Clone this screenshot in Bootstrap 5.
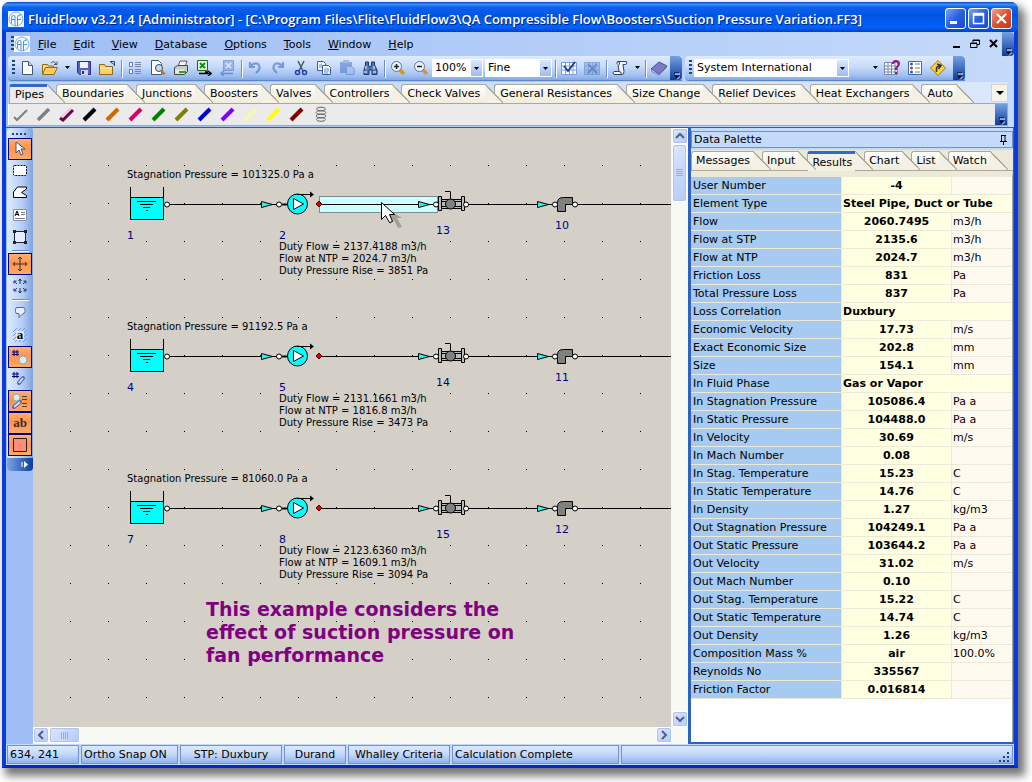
<!DOCTYPE html>
<html lang="en">
<head>
<meta charset="utf-8">
<meta name="viewport" content="width=device-width, initial-scale=1">
<title>FluidFlow v3.21.4</title>
<link href="https://cdn.jsdelivr.net/npm/bootstrap@5.3.0/dist/css/bootstrap.min.css" rel="stylesheet">
<style>
:root{--bar:linear-gradient(#e0ecfe 0,#c6dafb 45%,#a3c1f1 80%,#82a8e4)}
body{background:#fff;color:#000;font:11px/16px "DejaVu Sans",Verdana,sans-serif}
button,select{font:inherit;color:inherit}
.app{margin:2px 14px 14px 2px;min-height:calc(100vh - 16px);border:solid #0a3be0;border-width:0 4px 3px;border-bottom-color:#0729b8;border-radius:8px 8px 0 0;box-shadow:5px 6px 8px 2px #777;background:#9ebef5}
.titlebar{height:30px;margin:0 -4px;padding:3px 6px 0;border-radius:7px 7px 0 0;background:linear-gradient(#0a48d0 0,#3c8cf8 8%,#0a62ee 18%,#0054e3 45%,#0062fb 85%,#003fc8);color:#fff}
.titletext{font:600 13px/18px "Open Sans","Trebuchet MS",sans-serif;text-shadow:1px 1px #00247e}
.wingroup{gap:2px}
.winbtn{width:21px;height:21px;border:1px solid #fff;border-radius:3px;background:linear-gradient(135deg,#7ba3f5,#2a5fe0 50%,#1a4bc8)}
.winbtn.shut{background:linear-gradient(135deg,#f0a088,#e0502c 50%,#c83818)}
.menubar{height:24px;padding-left:5px;background:linear-gradient(90deg,#9ebef5,#c4dafa)}
.menubar a{color:#000;text-decoration:none;padding:1px 9px 0 8px}
.toolrow{height:26px;padding-left:2px;gap:3px;background:linear-gradient(90deg,#9ebef5,#c4dafa)}
.strip{height:24px;padding-left:4px;background:var(--bar);border-radius:4px 0 0 4px;box-shadow:0 1px #5a84cc}
.grip{width:3px;height:16px;flex:none;background:repeating-linear-gradient(#23408a 0 2px,transparent 2px 4px)}
.tool{width:23px;height:22px;border:0;background:none;padding:0;display:flex;align-items:center;justify-content:center;flex:none}
.tool svg,.pen svg{width:16px;height:16px;flex:none}
.slim{width:11px}
.off{opacity:.5}
.sep{width:1px;height:17px;margin:0 1px 0 3px;background:#6a8ccb;box-shadow:1px 1px #fff;flex:none}
.more{width:12px;align-self:stretch;border:0;padding:0;background:linear-gradient(#76a0e4,#0a3d9c);border-radius:0 4px 4px 0;display:flex;align-items:end;justify-content:center}
.combo{height:18px;border:1px solid #fff;border-radius:0;appearance:none;padding:0 2px;background:url("data:image/svg+xml,%3Csvg xmlns='http://www.w3.org/2000/svg' width='5' height='3'%3E%3Cpath d='M0 0h5L2.500 3z'/%3E%3C/svg%3E") right 3px center no-repeat,linear-gradient(#dbe8fd,#9dbcf0) right/11px 100% no-repeat,#fff}
.zoombox{width:51px;margin-right:2px}.gradebox{width:67px}.unitbox{width:155px;margin-left:2px}
.blank{width:20px}
.component{background:linear-gradient(90deg,#9ebef5,#c4dafa);padding:0 6px 1px 2px;border-bottom:1px solid #2d5bb0}
.tabline{height:21px;padding:2px 0 0 1px;background:linear-gradient(90deg,#bdd3f8,#dbe7fc);overflow:hidden}
.tabx{position:relative;flex:none;height:19px;margin:0 9px 0 0;padding:0 3px 0 4px;border:1px solid #aca899;border-width:1px 0 0 1px;border-radius:3px 0 0 0;background:linear-gradient(#fffffd,#efecdc);white-space:nowrap;text-align:left}
.tabx.long{padding-right:6px}
.tabline .tabx{padding-left:5px}
.tabline .tabx.long{padding-right:5px}
.tabx::after{content:"";position:absolute;z-index:1;left:100%;top:-1px;width:18px;height:19px;background:linear-gradient(to top right,#f4f1e4 0 47%,#aca899 48% 52%,transparent 53%)}
.tabx span{position:relative;z-index:2}
.tabx.on{background:#ebebeb;border-top:3px solid #316ac5;padding-top:0;line-height:14px}
.tabx.on::after{top:-3px;background:linear-gradient(to top right,#ebebeb 0 47%,#aca899 48% 52%,transparent 53%)}
.moretabs{width:17px;height:18px;border:1px solid #d8d4c4;background:#f6f4ea}
.pens{height:23px;background:#ebebeb;border:1px solid #aca899;border-left-color:#fff}
.pen{width:23px;height:20px;border:0;padding:0;background:none;display:flex;align-items:center;justify-content:center}
.sidewrap{margin-left:1px}
.sidebar{width:26px;height:343px;background:linear-gradient(90deg,#dfebfe,#b4cdf6 60%,#7ea4e0);border-radius:4px;overflow:hidden}
.sidebar .tool{width:24px}
.sidebar .on{background:linear-gradient(#ffb070,#ff9448 45%,#ffa868);border:1px solid #000080}
.hgrip{width:16px;height:2px;margin:5px 0 3px;background:repeating-linear-gradient(90deg,#23408a 0 2px,transparent 2px 4px);flex:none}
.hsep{width:17px;height:1px;margin:2px 0;background:#6a8ccb;box-shadow:0 1px #fff;flex:none}
.side-end{width:26px;height:13px;border:0;padding:0 4px 0 0;background:linear-gradient(90deg,#7ba4e6,#0a3d9c)}
.sheet{background:#d4d0c8}
.sheet svg{display:block;width:100%;height:100%}
.sheet .lbl{font-size:10px}
.sheet .num{font-size:11px;fill:#000080}
.sheet .note{font-size:19px;font-weight:700;fill:#800080}
.vbar{width:17px;background:#f9f9f4}
.hbar{height:17px;background:#f9f9f4}
.sb{border:1px solid #fff;outline:1px solid #b0c4f4;outline-offset:-2px;border-radius:3px;background:linear-gradient(135deg,#dce6fe,#b6c9f8);padding:0;width:16px;height:16px;display:flex;align-items:center;justify-content:center}
.sb.tall{height:58px;width:15px}.sb.wide{width:31px}
.palette{width:326px;border:solid #2d63c0;border-width:0 1px 2px 3px;background:#c4dafa;padding:3px 0 0}
.palhead{height:17px;border:1px solid #7a8fb8;background:#c4dafa;padding:0 5px 0 2px;margin-bottom:2px}
.paltabs{height:21px;background:#ece9d8;padding:1px 0 0;border-bottom:1px solid #aca899}
.paltabs .tabx.on{height:20px;line-height:12px;background:#f4f1e4}
.paltabs .tabx.on::after{background:linear-gradient(to top right,#f4f1e4 0 47%,#aca899 48% 52%,transparent 53%)}
.gridbox{background:#fff;border-top:6px solid #ece9d8;border-right:1px solid #aca899}
.props{width:100%;table-layout:fixed;border-collapse:separate;border-spacing:0;line-height:17px}
.props th,.props td{height:18px;padding:0 1px;font-weight:400;white-space:nowrap;border-bottom:1px solid #ece9d8;border-right:1px solid #ece9d8}
.props th{width:151px;background:#a6caf0;padding-left:2px}
.props td{width:110px;background:#ffffe1;font-weight:700;text-align:center}
.props td+td{width:auto;background:#fffaf0;font-weight:400;text-align:left;border-right:0}
.props .span{text-align:left;border-right:0}
.statusbar{height:21px;gap:2px;padding:1px;background:#c4dafa}
.cellx{height:19px;line-height:17px;border:1px solid #6f93cc;background:linear-gradient(#dce9fd,#c2d8fa 50%,#8fb2e9);padding:0 2px;white-space:nowrap;width:102px}
.cellx.c1{width:72px}.cellx.c2{width:97px}.cellx.c4{width:62px}.cellx.c6{width:167px}
.cellx.c7{width:auto}
</style>
</head>
<body>
<svg class="d-none" aria-hidden="true">
<symbol id="i-more" viewBox="0 0 7 8"><path d="M1 1h5" stroke="#000"/><path d="M1 3.500h5L3.500 6.500z" fill="#000"/><path d="M2 2h5M4 7.500l3-3" stroke="#fff" fill="none"/></symbol>
<symbol id="i-logo" viewBox="0 0 16 16"><path fill="#fff" d="M0 0h16v16H0z"/><circle cx="8" cy="8" r="7" fill="#f2f8fe" stroke="#78aede"/><path d="M3.500 12.500V7q0-2.500 2-2.500t1.500 2V15M9.500 15V6q0-2.500 3.500-2M3.500 8.500h3.500M9.500 8.500h3.500" fill="none" stroke="#4d93d6"/></symbol>
<symbol id="s-unit" overflow="visible">
 <path d="M167 204.500h112M321 204.500h115M466 204.500h2600" stroke="#000"/>
 <path d="M130 197h33v22h-33z" fill="#0ff"/><path d="M130.500 187v32.500h33V187M130 197.500h33M137 201.500h19M140 204.500h13M143 207.500h7M146 210.500h2" fill="none" stroke="#000"/>
 <path d="M282 204.500h5" stroke="#000" stroke-width="2"/>
 <circle cx="297.500" cy="204" r="10" fill="#0ff" stroke="#000"/><path d="M293.500 198.500v11l10-5.500z" fill="#fff" stroke="#000"/><path d="M297 194.500h14" stroke="#000"/><path d="M310 191.500v6l4-3z"/>
 <path d="M319 201l3 3-3 3-3-3z" fill="#e00000" stroke="#500"/>
 <g fill="#3ee" stroke="#000"><path d="M261.500 201.500v6l11-3zM418.500 201.500v6l11-3zM537.500 201.500v6l11-3z"/></g>
 <path d="M438.500 196.500h3v3h20v-3h3v14h-3v-2h-20v2h-3z" fill="#bbb" stroke="#000"/><path d="M441.500 199v10M461.500 199v10M450.500 200v-8M445 191.500h5.500M441 201.500h5M455 201.500h6M441 206.500h5M455 206.500h6" fill="none" stroke="#000"/><circle cx="450.500" cy="204" r="5" fill="#808080" stroke="#000"/>
 <path d="M557.500 211.500v-9q0-5 6-5h9v7h-7v7z" fill="#808080" stroke="#000"/>
 <g fill="#fff" stroke="#000"><circle cx="167" cy="204.500" r="2.500"/><circle cx="279" cy="204.500" r="2.500"/><circle cx="436" cy="204.500" r="2.500"/><circle cx="466" cy="204.500" r="2.500"/><circle cx="555" cy="204.500" r="2.500"/><circle cx="575" cy="204.500" r="2.500"/></g>
</symbol>
</svg>

<div class="app d-flex flex-column">
 <header class="titlebar d-flex align-items-center">
  <svg width="16" height="16" class="me-1 flex-shrink-0"><use href="#i-logo"/></svg>
  <div class="titletext flex-grow-1 text-nowrap overflow-hidden">FluidFlow v3.21.4 [Administrator] - [C:\Program Files\Flite\FluidFlow3\QA Compressible Flow\Boosters\Suction Pressure Variation.FF3]</div>
  <div class="wingroup d-flex">
   <button class="winbtn p-0 d-flex" aria-label="Minimize"><svg width="19" height="19"><path d="M4 12h7v3H4z" fill="#fff"/></svg></button>
   <button class="winbtn p-0 d-flex" aria-label="Maximize"><svg width="19" height="19"><path d="M4.500 4.500h10v10h-10zM4 6h11" fill="none" stroke="#fff" stroke-width="1.500"/></svg></button>
   <button class="winbtn shut p-0 d-flex" aria-label="Close"><svg width="19" height="19"><path d="M5 5l9 9M14 5l-9 9" stroke="#fff" stroke-width="2.200"/></svg></button>
  </div>
 </header>

 <nav class="menubar d-flex align-items-center">
  <span class="grip"></span><svg width="16" height="16"><use href="#i-logo"/></svg>
  <a href="#"><u>F</u>ile</a><a href="#"><u>E</u>dit</a><a href="#"><u>V</u>iew</a><a href="#"><u>D</u>atabase</a><a href="#"><u>O</u>ptions</a><a href="#"><u>T</u>ools</a><a href="#"><u>W</u>indow</a><a href="#"><u>H</u>elp</a>
  <button class="tool slim ms-auto me-2" aria-label="Minimize document"><svg viewBox="-5 -3 16 16"><path d="M1 8h7" stroke="#000" stroke-width="2"/></svg></button>
  <button class="tool slim me-2" aria-label="Restore document"><svg viewBox="-4 -3 16 16"><path d="M3 3V1h6.500v4.500H7M.500 4.500H7v4H.500zM.500 4h6.500M3 1.500h6" fill="none" stroke="#000"/></svg></button>
  <button class="tool slim me-1" aria-label="Close document"><svg viewBox="-4 -3 16 16"><path d="M1 1l7 7M8 1L1 8" stroke="#000" stroke-width="2"/></svg></button>
  <button class="more" aria-label="Menu options"><svg width="7" height="8"><use href="#i-more"/></svg></button>
 </nav>

 <div class="toolrow d-flex">
  <div class="strip d-flex align-items-center">
   <span class="grip"></span>
   <button class="tool" aria-label="New"><svg viewBox="0 0 16 16"><path d="M3.500 1.500h6l4 4v9h-10z" fill="#fff" stroke="#46566f"/><path d="M9.500 1.500v4h4" fill="#c6d6ee" stroke="#46566f"/></svg></button>
   <button class="tool" aria-label="Open"><svg viewBox="0 0 16 16"><path d="M.500 14V4.500h5l1 1.500h5v2" fill="#ffd86b" stroke="#92681c"/><path d="M.500 14.500l3-7h12l-3.500 7z" fill="#ffcf58" stroke="#92681c"/><path d="M9 3q3-3 5 1M15 1.500v3h-3" fill="none" stroke="#3c5578"/></svg></button>
   <button class="tool slim" aria-label="Open recent"><svg viewBox="-6 -6 16 16"><path d="M0 0h5L2.500 3z"/></svg></button>
   <button class="tool" aria-label="Save"><svg viewBox="0 0 16 16"><path d="M1.500 1.500h13v13h-11l-2-2z" fill="#5a62c8" stroke="#2c3080"/><path d="M4 2h8v6H4z" fill="#eef2fc"/><path d="M5 10h7v5H5z" fill="#cfd4e8"/><path d="M6 11h2v3H6z" fill="#2c3080"/></svg></button>
   <button class="tool" aria-label="Close project"><svg viewBox="0 0 16 16"><path d="M.500 14.500v-10h5l1 2h7v8z" fill="#ffd064" stroke="#92681c"/><path d="M1 8h12" stroke="#fff3b8"/><path d="M15.500 6V1.500H11M11 1.500l4 3" fill="none" stroke="#23408a"/></svg></button>
   <span class="sep"></span>
   <button class="tool" aria-label="Properties"><svg viewBox="0 0 16 16"><path d="M2.500 2.500h3v4h-3zM2.500 9.500h3v4h-3z" fill="#fff" stroke="#6178c4"/><path d="M8 2.500h6M8 4.500h6M8 6.500h6M8 9.500h6M8 11.500h6M8 13.500h6" stroke="#7c86a0"/></svg></button>
   <button class="tool" aria-label="Print preview"><svg viewBox="0 0 16 16"><path d="M1.500 .500h7l3 3v11h-10z" fill="#fff" stroke="#46566f"/><circle cx="9" cy="8" r="3.500" fill="#bfe0ee" stroke="#445"/><path d="M11.500 10.500l3 4" stroke="#c47a1c" stroke-width="2.500"/></svg></button>
   <button class="tool" aria-label="Print"><svg viewBox="0 0 16 16"><path d="M5 7l2-6h7l-2 6" fill="#fff" stroke="#556"/><path d="M1.500 7.500l3-2h10v6l-3 3h-10z" fill="#c8ccc4" stroke="#444"/><path d="M2 9.500h9v4H2z" fill="#e8ece4"/><path d="M6 12h7" stroke="#2da02d" stroke-width="2"/></svg></button>
   <button class="tool" aria-label="Export to Excel"><svg viewBox="0 0 16 16"><path d="M1.500 .500h10v10h-10z" fill="#e8f8e4" stroke="#176b17"/><path d="M4 3l5 5M9 3L4 8" stroke="#168a16" stroke-width="2"/><path d="M3 13.500h11M12 11l3 2.500-3 2.500M9 12h3" stroke="#000" stroke-width="1.500" fill="none"/></svg></button>
   <button class="tool off" aria-label="Import from Excel"><svg viewBox="0 0 16 16"><path d="M4.500 .500h10v10h-10z" fill="#6a94dc" stroke="#3d66b4"/><path d="M7 3l5 5M12 3L7 8" stroke="#fff" stroke-width="1.500"/><path d="M14 13.500H3M5 11l-3 2.500L5 16" stroke="#2d56a4" stroke-width="1.500" fill="none"/></svg></button>
   <span class="sep"></span>
   <button class="tool off" aria-label="Undo"><svg viewBox="0 0 16 16"><path d="M3 2v5h5M3 7q4-5 8-3 4 4-2 9" fill="none" stroke="#2d5bb4" stroke-width="2.200"/></svg></button>
   <button class="tool off" aria-label="Redo"><svg viewBox="0 0 16 16"><path d="M13 2v5H8M13 7Q9 2 5 4q-4 4 2 9" fill="none" stroke="#2d5bb4" stroke-width="2.200"/></svg></button>
   <button class="tool" aria-label="Cut"><svg viewBox="0 0 16 16"><path d="M5 1l5 10M11 1L6 11" stroke="#46566f" stroke-width="1.500"/><circle cx="4.500" cy="12.500" r="2" fill="none" stroke="#1c3fa8" stroke-width="1.500"/><circle cx="11.500" cy="12.500" r="2" fill="none" stroke="#1c3fa8" stroke-width="1.500"/></svg></button>
   <button class="tool" aria-label="Copy"><svg viewBox="0 0 16 16"><path d="M1.500 1.500h6l2 2v7h-8z" fill="#fff" stroke="#3a5a9c"/><path d="M6.500 5.500h6l2 2v7h-8z" fill="#fff" stroke="#3a5a9c"/><path d="M3 5h3M3 7h3M8 9h5M8 11h5M8 13h4" stroke="#5b86d8"/></svg></button>
   <button class="tool off" aria-label="Paste"><svg viewBox="0 0 16 16"><path d="M1 2h12v11H1z" fill="#3d6cc0"/><path d="M4 0h6v3H4z" fill="#7090c8"/><path d="M7.500 6.500h5l2.500 2v6H7.500z" fill="#9ab8ea" stroke="#3d66b4"/></svg></button>
   <button class="tool" aria-label="Find"><svg viewBox="0 0 16 16"><path d="M3.500 2h3v3l1 2h1l1-2V2h3v3l2.500 5v4.500h-5V10h-3v4.500h-5V10L3.500 5z" fill="#5476b8" stroke="#1d3264"/><path d="M2 12h3M11 12h3M4 6v3M12 6v3" stroke="#fff"/></svg></button>
   <span class="sep"></span>
   <button class="tool" aria-label="Zoom in"><svg viewBox="0 0 16 16"><path d="M10 10l4 4" stroke="#d09a30" stroke-width="3.500"/><circle cx="6.500" cy="6.500" r="5" fill="#e8f2fc" stroke="#66758c"/><path d="M4 6.500h5M6.500 4v5" stroke="#222" stroke-width="1.500"/></svg></button>
   <button class="tool" aria-label="Zoom out"><svg viewBox="0 0 16 16"><path d="M10 10l4 4" stroke="#d09a30" stroke-width="3.500"/><circle cx="6.500" cy="6.500" r="5" fill="#e8f2fc" stroke="#66758c"/><path d="M4 6.500h5" stroke="#222" stroke-width="1.500"/></svg></button>
   <select class="combo zoombox" aria-label="Zoom"><option>100%</option></select>
   <select class="combo gradebox" aria-label="Grid"><option>Fine</option></select>
   <span class="sep"></span>
   <button class="tool" aria-label="Calculate"><svg viewBox="0 0 16 16"><path d="M.500 2.500h15v12H.500zM.500 6h15M.500 10h15M4.500 3v11M8.500 3v11M12 3v11" fill="#fff" stroke="#7c9ad4"/><path d="M3 6l4 5 7-9" fill="none" stroke="#12409c" stroke-width="2"/></svg></button>
   <button class="tool off" aria-label="Stop"><svg viewBox="0 0 16 16"><path d="M.500 2.500h15v12H.500zM.500 6h15M.500 10h15M4.500 3v11M8.500 3v11M12 3v11" fill="#7ca4e8" stroke="#4c70b4"/><path d="M4 4l9 9M13 4l-9 9" stroke="#12409c" stroke-width="2"/></svg></button>
   <span class="sep"></span>
   <button class="tool" aria-label="Script"><svg viewBox="0 0 16 16"><path d="M5.500 1.500h9q1 3-1 3H11l1 7q0 3-2 3H2q-2-2 0-3h5l-1-7q-2-1-.500-3z" fill="#eef2fa" stroke="#334260"/><path d="M5.500 1.500q3 0 2 3M7 11.500q3 0 2 3" fill="none" stroke="#334260"/></svg></button>
   <button class="tool slim" aria-label="Script list"><svg viewBox="-6 -6 16 16"><path d="M0 0h5L2.500 3z"/></svg></button>
   <span class="sep"></span>
   <button class="tool" aria-label="Help book"><svg viewBox="0 0 16 16"><path d="M0 9l8-7 8 4-8 8z" fill="#7d7cc8" stroke="#4c4a90"/><path d="M0 9v2l8 4 8-8V6l-8 8z" fill="#eef" stroke="#4c4a90" stroke-width=".700"/></svg></button>
   <button class="more" aria-label="Toolbar options"><svg width="7" height="8"><use href="#i-more"/></svg></button>
  </div>
  <div class="strip d-flex align-items-center">
   <span class="grip"></span>
   <select class="combo unitbox" aria-label="Units"><option>System International</option></select>
   <span class="blank"></span>
   <button class="tool slim" aria-label="Unit list"><svg viewBox="-6 -6 16 16"><path d="M0 0h5L2.500 3z"/></svg></button>
   <button class="tool" aria-label="Query table"><svg viewBox="0 0 16 16"><path d="M.500 2.500h13v12H.500zM.500 6h13M.500 9h13M.500 12h13M4 3v11M7.500 3v11M11 3v11" fill="#fff" stroke="#7786ae"/><path d="M9 4q0-3 3-3t3 3q0 2-3 4v2M12 12v2" fill="none" stroke="#8c1c8c" stroke-width="2"/></svg></button>
   <button class="tool" aria-label="Legend"><svg viewBox="0 0 16 16"><path d="M1.500 1.500h13v13h-13z" fill="#fff" stroke="#4466aa"/><path d="M8 4h5M8 8h5M8 12h5" stroke="#777"/><circle cx="4.500" cy="4" r="1.500" fill="#26b"/><circle cx="4.500" cy="8" r="1.500" fill="#c33"/><circle cx="4.500" cy="12" r="1.500" fill="#26b"/></svg></button>
   <button class="tool me-1" aria-label="Route"><svg viewBox="0 0 16 16"><path d="M8 .500L15.500 8 8 15.500.500 8z" fill="#ffd23c" stroke="#a07410"/><path d="M6.500 12V8.500q0-2 3-2.500M7 4l4 1.500L8.500 9" fill="none" stroke="#333" stroke-width="1.600"/></svg></button>
   <button class="more" aria-label="Toolbar options"><svg width="7" height="8"><use href="#i-more"/></svg></button>
  </div>
 </div>

 <section class="component">
  <div class="tabline d-flex">
   <button class="tabx on"><span>Pipes</span></button><button class="tabx"><span>Boundaries</span></button><button class="tabx"><span>Junctions</span></button><button class="tabx"><span>Boosters</span></button><button class="tabx"><span>Valves</span></button><button class="tabx"><span>Controllers</span></button><button class="tabx long"><span>Check Valves</span></button><button class="tabx long"><span>General Resistances</span></button><button class="tabx"><span>Size Change</span></button><button class="tabx long"><span>Relief Devices</span></button><button class="tabx"><span>Heat Exchangers</span></button><button class="tabx"><span>Auto</span></button>
   <button class="tool moretabs ms-auto" aria-label="More tabs"><svg viewBox="-4 -6 16 16"><path d="M0 0h8L4 4z"/></svg></button>
  </div>
  <div class="pens d-flex">
   <button class="pen" aria-label="Thin grey pipe"><svg viewBox="0 0 16 16"><path d="M1 11l3 3L14 4" fill="none" stroke="#808080" stroke-width="2"/></svg></button>
   <button class="pen" aria-label="Grey pipe"><svg viewBox="0 0 16 16"><path d="M2 14L13 3" stroke="#808080" stroke-width="3.500"/></svg></button>
   <button class="pen" aria-label="Plum pipe"><svg viewBox="0 0 16 16"><path d="M1 12l3 2L14 4" stroke="#700048" fill="none" stroke-width="3"/><path d="M2 11L12 2" stroke="#fbd" stroke-width="1.500"/></svg></button>
   <button class="pen" aria-label="Black pipe"><svg viewBox="0 0 16 16"><path d="M2 14L13 3" stroke="#000" stroke-width="4"/></svg></button>
   <button class="pen" aria-label="Orange pipe"><svg viewBox="0 0 16 16"><path d="M2 14L13 3" stroke="#d06800" stroke-width="4"/></svg></button>
   <button class="pen" aria-label="Pink pipe"><svg viewBox="0 0 16 16"><path d="M2 14L13 3" stroke="#d8006c" stroke-width="4"/></svg></button>
   <button class="pen" aria-label="Green pipe"><svg viewBox="0 0 16 16"><path d="M2 14L13 3" stroke="#008000" stroke-width="4"/></svg></button>
   <button class="pen" aria-label="Olive pipe"><svg viewBox="0 0 16 16"><path d="M2 14L13 3" stroke="#808000" stroke-width="4"/></svg></button>
   <button class="pen" aria-label="Blue pipe"><svg viewBox="0 0 16 16"><path d="M2 14L13 3" stroke="#0000d8" stroke-width="4"/></svg></button>
   <button class="pen" aria-label="Violet pipe"><svg viewBox="0 0 16 16"><path d="M2 14L13 3" stroke="#8000ff" stroke-width="4"/></svg></button>
   <button class="pen" aria-label="Pale pipe"><svg viewBox="0 0 16 16"><path d="M2 14L13 3" stroke="#f6f6b4" stroke-width="4"/></svg></button>
   <button class="pen" aria-label="Yellow pipe"><svg viewBox="0 0 16 16"><path d="M2 14L13 3" stroke="#ff0" stroke-width="4"/></svg></button>
   <button class="pen" aria-label="Maroon pipe"><svg viewBox="0 0 16 16"><path d="M2 14L13 3" stroke="#800000" stroke-width="4"/></svg></button>
   <button class="pen" aria-label="Coil"><svg viewBox="0 0 16 16"><g fill="none" stroke="#666"><ellipse cx="9" cy="3" rx="4.500" ry="1.800"/><ellipse cx="9" cy="6.500" rx="5" ry="1.800"/><ellipse cx="9" cy="10" rx="5" ry="1.800"/><ellipse cx="9" cy="13.500" rx="4.500" ry="1.800"/></g></svg></button>
   <button class="more ms-auto rounded-0" aria-label="Palette options"><svg width="7" height="8"><use href="#i-more"/></svg></button>
  </div>
 </section>

 <main class="d-flex flex-grow-1">
  <div class="sidewrap">
   <div class="sidebar d-flex flex-column align-items-center">
    <span class="hgrip"></span>
    <button class="tool on" aria-label="Select"><svg viewBox="0 0 16 16"><path d="M4 1v11l3-3 2 5 2-1-2-5h4z" fill="#fff" stroke="#46566f"/></svg></button>
    <button class="tool" aria-label="Marquee"><svg viewBox="0 0 16 16"><rect x="1.500" y="2.500" width="13" height="10" rx="1" fill="#fff" stroke="#000" stroke-dasharray="2 1"/></svg></button>
    <button class="tool" aria-label="Polygon"><svg viewBox="0 0 16 16"><path d="M1.500 12.500V7l4-5h9v2l-5 3.500 5 3v2z" fill="#fff" stroke="#000"/></svg></button>
    <button class="tool" aria-label="Text"><svg viewBox="0 0 16 16"><path d="M1.500 2.500h13v11h-13z" fill="#fff" stroke="#8791a8"/><path d="M3 9l2-5 2 5M4 7.500h2" fill="none" stroke="#000"/><path d="M9 5.500h4M9 7.500h4M3 11.500h10" stroke="#778"/></svg></button>
    <button class="tool" aria-label="Frame"><svg viewBox="0 0 16 16"><path d="M2.500 2.500h11v11h-11z" fill="#e4eefe" stroke="#223"/><path d="M1 1h3v3H1zM12 1h3v3h-3zM1 12h3v3H1zM12 12h3v3h-3z" fill="#223"/></svg></button>
    <span class="hsep"></span>
    <button class="tool on" aria-label="Move"><svg viewBox="0 0 16 16"><path d="M8 1v14M1 8h14M6 3l2-2 2 2M6 13l2 2 2-2M3 6L1 8l2 2M13 6l2 2-2 2" fill="none" stroke="#333"/></svg></button>
    <button class="tool" aria-label="Spread"><svg viewBox="0 0 16 16"><path d="M8 6V1M8 10v5M6.500 3L8 1l1.500 2M6.500 13L8 15l1.500-2M5 6L2 3M2 5.500V3h2.500M11 6l3-3M11.500 3H14v2.500M5 10l-3 3M2 10.500V13h2.500M11 10l3 3M14 10.500V13h-2.500" fill="none" stroke="#23345c"/></svg></button>
    <span class="hsep"></span>
    <button class="tool" aria-label="Callout"><svg viewBox="0 0 16 16"><path d="M5 2.500h6q2 0 2 2v2q0 2-2 2l-4 4v-4H5q-1.500 0-1.500-2v-2q0-2 1.500-2z" fill="#e8f0fa" stroke="#5a6a8c"/></svg></button>
    <button class="tool" aria-label="Highlight text"><svg viewBox="0 0 16 16"><path d="M1 5l4-4M1 9l8-8M1 13L13 1M3 15L15 3M7 15l8-8M11 15l4-4" stroke="#7a9ae8"/><path d="M4 4h8v9H4z" fill="#dfe9fb"/><text x="8" y="12" text-anchor="middle" font-family="Liberation Serif,serif" font-weight="700" font-size="13">a</text></svg></button>
    <button class="tool on" aria-label="Node numbers"><svg viewBox="0 0 16 16"><path d="M2 1v6M5 1v6M0 3h7M0 5.500h7" stroke="#000080"/><circle cx="11" cy="11" r="4" fill="#d8ecf4" stroke="#8aa"/></svg></button>
    <button class="tool" aria-label="Pipe numbers"><svg viewBox="0 0 16 16"><path d="M2 1v6M5 1v6M0 3h7M0 5.500h7" stroke="#000080"/><path d="M7 12l4-5" stroke="#4a6ab0" stroke-width="4" stroke-linecap="round"/><path d="M7 12l4-5" stroke="#cfe0f8" stroke-width="2"/></svg></button>
    <button class="tool on" aria-label="Results"><svg viewBox="0 0 16 16"><circle cx="4.500" cy="4.500" r="3.500" fill="#d8ecf4" stroke="#8aa"/><path d="M2 14l6-5" stroke="#4a6ab0" stroke-width="4" stroke-linecap="round"/><path d="M2 14l6-5" stroke="#cfe0f8" stroke-width="2"/><path d="M10 3.500h5M10 6.500h5M10 10.500h5M10 13.500h5" stroke="#444"/></svg></button>
    <button class="tool on" aria-label="Labels"><svg viewBox="0 0 16 16"><text x="8" y="12" text-anchor="middle" font-family="Liberation Serif,serif" font-weight="700" font-size="13" fill="#333">ab</text></svg></button>
    <button class="tool on" aria-label="Fill"><svg viewBox="0 0 16 16"><path d="M1.500 1.500h13v13h-13z" fill="#ff8c78" stroke="#222"/></svg></button>
    <button class="side-end d-flex justify-content-end align-items-center mt-auto" aria-label="More tools"><svg width="8" height="7"><path d="M1 1v5" stroke="#fff"/><path d="M3 0v7l4-3.500z" fill="#fff"/></svg></button>
   </div>
  </div>

  <div class="d-flex flex-column flex-grow-1 overflow-hidden">
   <div class="d-flex flex-grow-1">
    <div class="sheet flex-grow-1 overflow-hidden">
     <svg role="img" aria-label="Flowsheet">
      <defs><pattern id="dots" width="38" height="38" patternUnits="userSpaceOnUse"><path d="M37 37h1v1h-1z"/></pattern></defs>
      <rect width="100%" height="100%" fill="url(#dots)"/>
      <g transform="translate(-33,-128)">
       <rect x="319.500" y="196.500" width="118" height="16" fill="#ccffff" stroke="#808c8c"/>
       <use href="#s-unit"/><use href="#s-unit" y="152"/><use href="#s-unit" y="304"/>
       <g class="lbl">
        <text x="127" y="178">Stagnation Pressure = 101325.0 Pa a</text>
        <text x="279" y="250">Duty Flow = 2137.4188 m3/h</text><text x="279" y="262">Flow at NTP = 2024.7 m3/h</text><text x="279" y="274">Duty Pressure Rise = 3851 Pa</text>
        <text x="127" y="330">Stagnation Pressure = 91192.5 Pa a</text>
        <text x="279" y="402">Duty Flow = 2131.1661 m3/h</text><text x="279" y="414">Flow at NTP = 1816.8 m3/h</text><text x="279" y="426">Duty Pressure Rise = 3473 Pa</text>
        <text x="127" y="482">Stagnation Pressure = 81060.0 Pa a</text>
        <text x="279" y="554">Duty Flow = 2123.6360 m3/h</text><text x="279" y="566">Flow at NTP = 1609.1 m3/h</text><text x="279" y="578">Duty Pressure Rise = 3094 Pa</text>
       </g>
       <g class="num">
        <text x="127" y="239">1</text><text x="279" y="239">2</text><text x="436" y="234">13</text><text x="555" y="229">10</text>
        <text x="127" y="391">4</text><text x="279" y="391">5</text><text x="436" y="386">14</text><text x="555" y="381">11</text>
        <text x="127" y="543">7</text><text x="279" y="543">8</text><text x="436" y="538">15</text><text x="555" y="533">12</text>
       </g>
       <g class="note"><text x="206" y="616">This example considers the</text><text x="206" y="639">effect of suction pressure on</text><text x="206" y="662">fan performance</text></g>
       <path d="M386 208l4 16 4-4 4 8 4-1-5-9h5z" fill="#555" opacity=".4"/>
       <path d="M381.500 202.500v17l4-4 4 7 3-1-3-7h5z" fill="#fff" stroke="#000"/>
      </g>
     </svg>
    </div>
    <div class="vbar d-flex flex-column align-items-center">
     <button class="sb" aria-label="Scroll up"><svg width="10" height="8"><path d="M1 6l4-4 4 4" fill="none" stroke="#4d6185" stroke-width="2"/></svg></button>
     <div class="sb tall"><svg width="7" height="8"><path d="M0 .500h7M0 2.500h7M0 4.500h7M0 6.500h7" stroke="#8cb0f8"/></svg></div>
     <button class="sb mt-auto" aria-label="Scroll down"><svg width="10" height="8"><path d="M1 2l4 4 4-4" fill="none" stroke="#4d6185" stroke-width="2"/></svg></button>
    </div>
   </div>
   <div class="hbar d-flex pe-3">
    <button class="sb" aria-label="Scroll left"><svg width="8" height="10"><path d="M6 1L2 5l4 4" fill="none" stroke="#4d6185" stroke-width="2"/></svg></button>
    <div class="sb wide"><svg width="8" height="7"><path d="M.500 0v7M2.500 0v7M4.500 0v7M6.500 0v7" stroke="#8cb0f8"/></svg></div>
    <button class="sb ms-auto" aria-label="Scroll right"><svg width="8" height="10"><path d="M2 1l4 4-4 4" fill="none" stroke="#4d6185" stroke-width="2"/></svg></button>
   </div>
  </div>

  <aside class="palette d-flex flex-column flex-shrink-0">
   <div class="palhead d-flex align-items-center"><span class="flex-grow-1">Data Palette</span><svg width="7" height="10"><path d="M1.500 0v6M5 0v6M1 .500h5M0 6.500h7M3.500 7v3" fill="none" stroke="#000"/></svg></div>
   <div class="paltabs d-flex">
    <button class="tabx"><span>Messages</span></button><button class="tabx"><span>Input</span></button><button class="tabx on"><span>Results</span></button><button class="tabx"><span>Chart</span></button><button class="tabx"><span>List</span></button><button class="tabx"><span>Watch</span></button>
   </div>
   <div class="gridbox flex-grow-1">
    <table class="props">
     <tr><th>User Number</th><td>-4</td><td></td></tr>
     <tr><th>Element Type</th><td colspan="2" class="span">Steel Pipe, Duct or Tube</td></tr>
     <tr><th>Flow</th><td>2060.7495</td><td>m3/h</td></tr>
     <tr><th>Flow at STP</th><td>2135.6</td><td>m3/h</td></tr>
     <tr><th>Flow at NTP</th><td>2024.7</td><td>m3/h</td></tr>
     <tr><th>Friction Loss</th><td>831</td><td>Pa</td></tr>
     <tr><th>Total Pressure Loss</th><td>837</td><td>Pa</td></tr>
     <tr><th>Loss Correlation</th><td colspan="2" class="span">Duxbury</td></tr>
     <tr><th>Economic Velocity</th><td>17.73</td><td>m/s</td></tr>
     <tr><th>Exact Economic Size</th><td>202.8</td><td>mm</td></tr>
     <tr><th>Size</th><td>154.1</td><td>mm</td></tr>
     <tr><th>In Fluid Phase</th><td colspan="2" class="span">Gas or Vapor</td></tr>
     <tr><th>In Stagnation Pressure</th><td>105086.4</td><td>Pa a</td></tr>
     <tr><th>In Static Pressure</th><td>104488.0</td><td>Pa a</td></tr>
     <tr><th>In Velocity</th><td>30.69</td><td>m/s</td></tr>
     <tr><th>In Mach Number</th><td>0.08</td><td></td></tr>
     <tr><th>In Stag. Temperature</th><td>15.23</td><td>C</td></tr>
     <tr><th>In Static Temperature</th><td>14.76</td><td>C</td></tr>
     <tr><th>In Density</th><td>1.27</td><td>kg/m3</td></tr>
     <tr><th>Out Stagnation Pressure</th><td>104249.1</td><td>Pa a</td></tr>
     <tr><th>Out Static Pressure</th><td>103644.2</td><td>Pa a</td></tr>
     <tr><th>Out Velocity</th><td>31.02</td><td>m/s</td></tr>
     <tr><th>Out Mach Number</th><td>0.10</td><td></td></tr>
     <tr><th>Out Stag. Temperature</th><td>15.22</td><td>C</td></tr>
     <tr><th>Out Static Temperature</th><td>14.74</td><td>C</td></tr>
     <tr><th>Out Density</th><td>1.26</td><td>kg/m3</td></tr>
     <tr><th>Composition Mass %</th><td>air</td><td>100.0%</td></tr>
     <tr><th>Reynolds No</th><td>335567</td><td></td></tr>
     <tr><th>Friction Factor</th><td>0.016814</td><td></td></tr>
    </table>
   </div>
  </aside>
 </main>

 <footer class="statusbar d-flex">
  <div class="cellx c1">634, 241</div><div class="cellx c2">Ortho Snap ON</div><div class="cellx text-center">STP: Duxbury</div><div class="cellx c4 text-center">Durand</div><div class="cellx text-center">Whalley Criteria</div><div class="cellx c6">Calculation Complete</div>
  <div class="cellx c7 flex-grow-1 d-flex justify-content-end align-items-end"><svg width="11" height="11"><path d="M8 0h2v2H8zM8 4h2v2H8zM8 8h2v2H8zM4 4h2v2H4zM4 8h2v2H4zM0 8h2v2H0z" fill="#23408a"/></svg></div>
 </footer>
</div>
<script src="https://cdn.jsdelivr.net/npm/bootstrap@5.3.0/dist/js/bootstrap.bundle.min.js"></script>
</body>
</html>
